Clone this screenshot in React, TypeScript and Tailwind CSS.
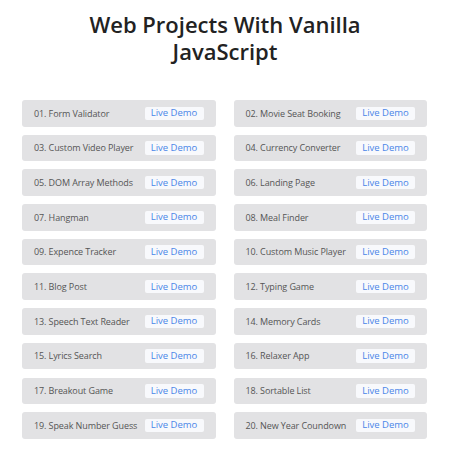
const projects = [
  "01. Form Validator",
  "02. Movie Seat Booking",
  "03. Custom Video Player",
  "04. Currency Converter",
  "05. DOM Array Methods",
  "06. Landing Page",
  "07. Hangman",
  "08. Meal Finder",
  "09. Expence Tracker",
  "10. Custom Music Player",
  "11. Blog Post",
  "12. Typing Game",
  "13. Speech Text Reader",
  "14. Memory Cards",
  "15. Lyrics Search",
  "16. Relaxer App",
  "17. Breakout Game",
  "18. Sortable List",
  "19. Speak Number Guess",
  "20. New Year Coundown",
];

export default function App() {
  return (
    <div className="w-[450px] h-[450px] bg-white font-['Open_Sans',sans-serif] overflow-hidden">
      <h1 className="pt-[11px] text-center text-[22px] leading-[27px] font-[550] text-[#222]">
        Web Projects With Vanilla
        <br />
        JavaScript
      </h1>
      <div className="mt-[35px] ml-[22px] w-[405px] grid grid-cols-2 gap-x-[18px] gap-y-[8.2px]">
        {projects.map((p) => (
          <div
            key={p}
            className="h-[26.5px] flex items-center justify-between gap-1 px-3 bg-[#e2e2e4] rounded-[3px]"
          >
            <span className="text-[9px] text-[#555] whitespace-nowrap tracking-[-0.1px]">{p}</span>
            <a
              href="#"
              className="shrink-0 w-[59px] h-[13.5px] flex items-center justify-center bg-[#f8f9fc] rounded-[2px] text-[9.5px] text-[#4a86e8]"
            >
              Live Demo
            </a>
          </div>
        ))}
      </div>
    </div>
  );
}
